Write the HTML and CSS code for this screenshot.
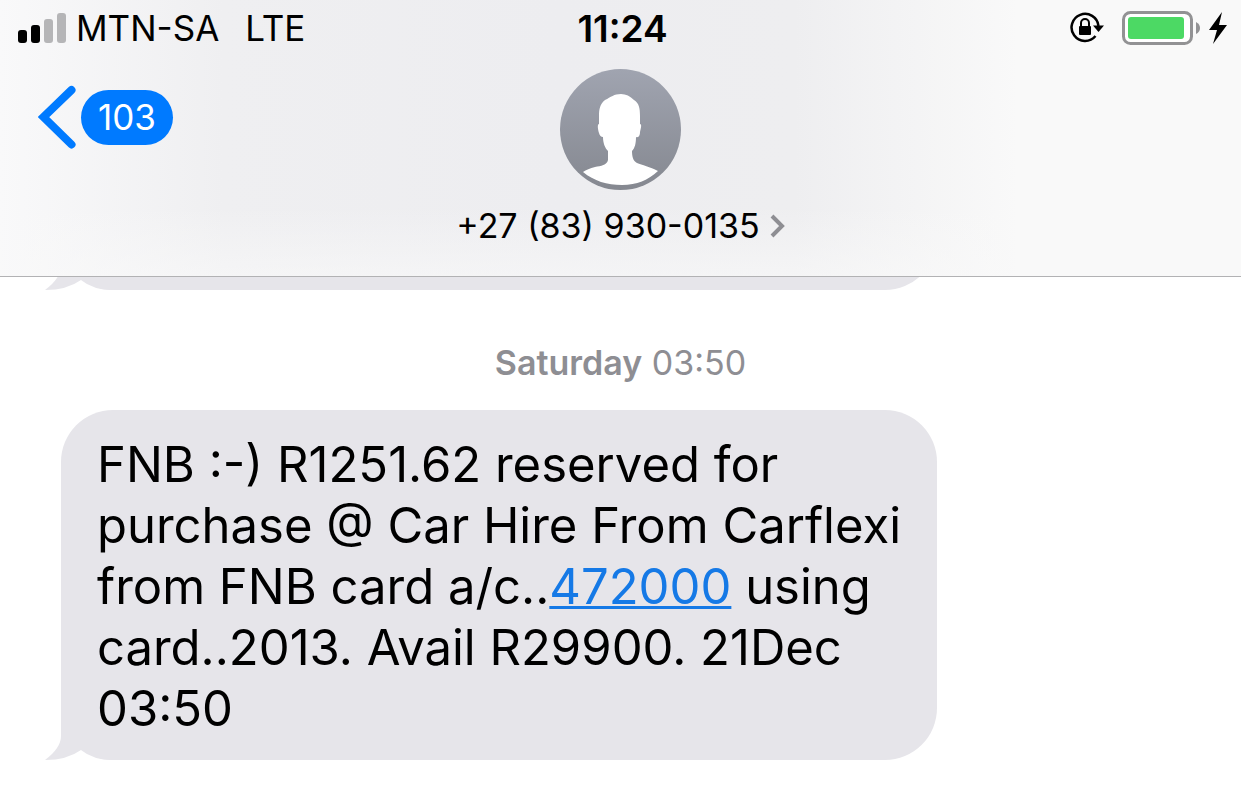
FILE: index.html
```html
<!DOCTYPE html>
<html lang="en">
	<head>
		<meta charset="utf-8">
		<meta name="viewport" content="width=device-width, initial-scale=1">
		<title>Messages</title>
		<link rel="stylesheet" href="styles.css">
	</head>
	<body>
		<header>
			<div class="status">
				<div class="carrier">
					<svg class="signal" width="48" height="30" viewBox="0 0 48 30" aria-hidden="true">
						<rect x="0" y="17" width="9" height="13" rx="3"/>
						<rect x="13" y="12" width="9" height="18" rx="3"/>
						<rect class="off" x="26" y="6" width="9" height="24" rx="3"/>
						<rect class="off" x="39" y="0" width="9" height="30" rx="3"/>
					</svg>
					<span>MTN-SA</span>
					<span class="network">LTE</span>
				</div>
				<time class="clock">11:24</time>
				<div class="power">
					<svg class="lock" width="34" height="32" viewBox="0 0 34 32" aria-hidden="true">
						<path d="M25.500 24A13.500 13.500 0 1 1 28.500 14" fill="none" stroke="#000" stroke-width="2.500"/>
						<path d="M23 13.500h11L28.500 20z"/>
						<rect x="9" y="14" width="12" height="9" rx="1"/>
						<path d="M11 15v-4a4 4 0 0 1 8 0v4" fill="none" stroke="#000" stroke-width="2"/>
					</svg>
					<svg class="battery" width="79" height="34" viewBox="0 0 79 34" aria-hidden="true">
						<rect x="1.500" y="1.500" width="68" height="31" rx="7" fill="#fff" stroke="#929294" stroke-width="3"/>
						<rect x="6" y="6" width="56" height="22" rx="3" fill="#4cd964"/>
						<path d="M74 11q4 2 4 6t-4 6z" fill="#929294"/>
					</svg>
					<svg width="18" height="32" viewBox="0 0 18 32" aria-hidden="true">
						<path d="M13 0L0 18h8L4 32 18 13h-8z"/>
					</svg>
				</div>
			</div>
			<nav>
				<button class="back" type="button" aria-label="Back, 103 unread">
					<svg width="38" height="64" viewBox="0 0 38 64" aria-hidden="true">
						<path d="M33.500 5L5.500 32l28 27.500" fill="none" stroke="#007aff" stroke-width="8" stroke-linecap="round" stroke-linejoin="miter"/>
					</svg>
					<span class="count">103</span>
				</button>
				<button class="contact" type="button">
					<svg width="121" height="121" viewBox="0 0 121 121" aria-hidden="true">
						<defs>
							<linearGradient id="shade" x1="0" y1="0" x2="0" y2="1">
								<stop offset="0" stop-color="#a0a4b0"/>
								<stop offset="1" stop-color="#858890"/>
							</linearGradient>
						</defs>
						<circle cx="60.500" cy="60.500" r="60.500" fill="url(#shade)"/>
						<path fill="#fff" d="M61 25c-7 0-10 3-16 6-5 4-6 9-6 16v8c-2 0-1 6 0 9q1 4 4 4c0 6 2 11 5 14v9c-1 5-7 6-13 7-5 1-9 3-12 5 11 9 24 13 39 13s26-5 36-14c-8-4-16-6-21-8-4-2-5-7-5-12 3-3 4-8 4-14 3 1 4-2 4-5 1-4 2-8 0-8v-8c0-8-1-13-6-16-4-4-8-6-13-6z"/>
					</svg>
					<span class="number">
						+27 (83) 930-0135
						<svg width="15" height="24" viewBox="0 0 15 24" aria-hidden="true">
							<path d="M2 2l10 10L2 22" fill="none" stroke="#8e8e93" stroke-width="4"/>
						</svg>
					</span>
				</button>
			</nav>
		</header>

		<main>
			<!-- bottom edge of the earlier message, scrolled under the header -->
			<div class="earlier">
				<div class="bubble">
					<svg class="tail" width="68" height="60" viewBox="0 0 68 60" aria-hidden="true"><path d="M16 0v36q0 12-16 24 22 0 36-10Q48 60 68 60V0z"/></svg>
				</div>
			</div>
			<p class="stamp"><strong>Saturday</strong> 03:50</p>
			<div class="bubble">
				<p>FNB :-) R1251.62 reserved for purchase @ Car Hire From Carflexi from FNB card a/c..<a href="tel:472000">472000</a> using card..2013. Avail R29900. 21Dec 03:50</p>
				<svg class="tail" width="68" height="60" viewBox="0 0 68 60" aria-hidden="true"><path d="M16 0v36q0 12-16 24 22 0 36-10Q48 60 68 60V0z"/></svg>
			</div>
		</main>
	</body>
</html>
```
FILE: styles.css
```css
* {
	box-sizing: border-box;
}

body {
	margin: 0;
	background: #fff;
	color: #000;
	font-family: Inter, "Liberation Sans", sans-serif;
}

p {
	margin: 0;
}

button {
	padding: 0;
	border: 0;
	background: none;
	color: inherit;
	font: inherit;
	cursor: pointer;
}

svg {
	display: block;
	flex: none;
}

header {
	padding-bottom: 28px;
	border-bottom: 1px solid #b2b2b4;
	background:
		linear-gradient(to bottom, transparent 75%, rgba(249, 249, 249, 0.6)),
		linear-gradient(to right, #f9f9fa 0, #efeff1 18%, #ededf0 45%, #eeeef0 64%, #f9f9f9 82%);
}

.status {
	display: grid;
	grid-template-columns: 1fr auto 1fr;
	align-items: center;
	height: 56px;
	padding: 0 14px 0 18px;
	font-size: 35px;
}

.carrier {
	display: flex;
	align-items: center;
	gap: 10px;
}

.signal .off {
	fill: #b5b5b7;
}

.network {
	margin-left: 16px;
}

.clock {
	font-size: 37px;
	font-weight: 600;
}

.power {
	display: flex;
	align-items: center;
	justify-content: flex-end;
}

.battery {
	margin: 0 8px 0 18px;
}

nav {
	display: grid;
	grid-template-columns: 1fr auto 1fr;
	align-items: start;
	padding: 13px 38px 0;
}

.back {
	display: flex;
	align-items: center;
	justify-self: start;
	gap: 5px;
	padding-top: 16px;
}

.count {
	height: 55px;
	padding: 0 17px;
	border-radius: 28px;
	background: #007aff;
	color: #fff;
	font-size: 35px;
	line-height: 55px;
}

.contact {
	display: flex;
	flex-direction: column;
	align-items: center;
	gap: 14px;
}

.number {
	display: flex;
	align-items: center;
	gap: 10px;
	font-size: 34px;
	line-height: 44px;
}

main {
	padding: 0 61px 28px;
}

.bubble {
	position: relative;
	z-index: 0;
	width: 100%;
	max-width: 876px;
	padding: 24px 20px 21px 36px;
	border-radius: 52px;
	background: #e6e5ea;
	font-size: 49px;
	line-height: 61px;
}

.bubble a {
	color: #1579e6;
	text-decoration-thickness: 3px;
}

/* sits between the bubble's background and its text */
.tail {
	position: absolute;
	z-index: -1;
	left: -16px;
	bottom: 0;
	fill: #e6e5ea;
}

.earlier {
	display: flex;
	align-items: flex-end;
	height: 13px;
	margin-left: -16px;
	padding-left: 16px;
	overflow: hidden;
}

.earlier .bubble {
	height: 120px;
}

.stamp {
	padding: 50px 0 25px;
	color: #8e8e93;
	font-size: 34px;
	line-height: 45px;
	text-align: center;
}

.stamp strong {
	font-weight: 600;
}
```
